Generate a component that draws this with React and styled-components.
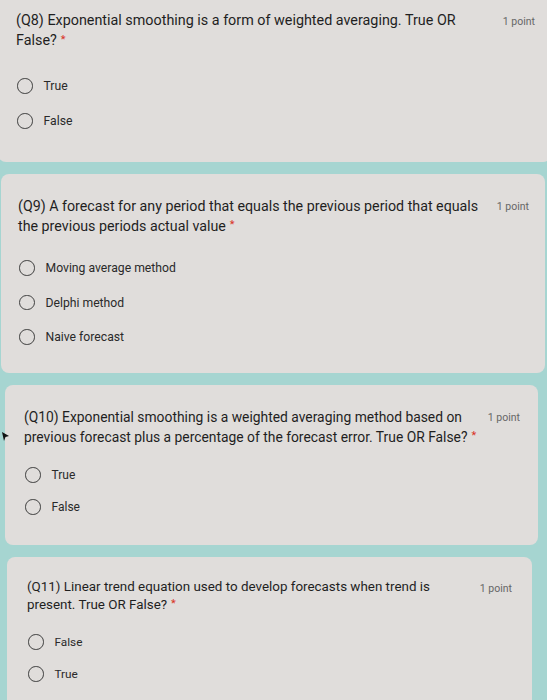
import React from "react";
import styled, { createGlobalStyle } from "styled-components";

const GlobalStyle = createGlobalStyle`
  html, body {
    margin: 0;
    padding: 0;
    background: #a6d5d1;
    overflow: hidden;
  }
  body {
    font-family: Roboto, "Liberation Sans", Arial, sans-serif;
  }
`;

const Page = styled.div`
  position: relative;
  display: flex;
  flex-direction: column;
  gap: 12px;
  margin-top: -12px;
  height: 720px;
`;

const Card = styled.section`
  background: #e0dddb;
  border-radius: 8px;
  margin: 0 ${(p) => p.$mr}px 0 ${(p) => p.$ml}px;
  padding: ${(p) => p.$pt}px ${(p) => p.$pr}px ${(p) => p.$pb}px ${(p) => p.$pl}px;
  flex-shrink: 0;
`;

const Header = styled.div`
  display: flex;
  align-items: flex-start;
`;

const Title = styled.div`
  flex: 1;
  min-width: 0;
  font-size: ${(p) => p.$fs}px;
  line-height: ${(p) => p.$lh}px;
  color: #1f1f1f;
  white-space: nowrap;
`;

const Line = styled.span`
  display: block;
`;

const Required = styled.span`
  color: #d93025;
  font-size: 11px;
  margin-left: 4px;
  vertical-align: top;
  position: relative;
  top: -1px;
`;

const Points = styled.span`
  font-size: 10.5px;
  color: #666;
  margin-top: 4px;
  flex-shrink: 0;
`;

const Options = styled.div`
  display: flex;
  flex-direction: column;
  gap: ${(p) => p.$gap}px;
  margin-top: ${(p) => p.$mt}px;
  padding-left: 1px;
`;

const Option = styled.label`
  display: flex;
  align-items: center;
  gap: 11px;
  height: 18px;
`;

const Radio = styled.span`
  width: 13.5px;
  height: 13.5px;
  border: 1.8px solid #3f3f3f;
  border-radius: 50%;
  flex-shrink: 0;
`;

const OptionText = styled.span`
  font-size: ${(p) => p.$fs}px;
  color: #2a2a2a;
`;

const Cursor = styled.svg`
  position: absolute;
  left: 1px;
  top: 443px;
`;

const questions = [
  {
    lines: ["(Q8) Exponential smoothing is a form of weighted averaging. True OR", "False?"],
    options: ["True", "False"],
    ml: -2, mr: -4, pl: 18, pr: 16, pt: 23, pb: 32, lh: 20, mt: 26, gap: 17, fs: 14.35, ofs: 12.2,
  },
  {
    lines: ["(Q9) A forecast for any period that equals the previous period that equals", "the previous periods actual value"],
    options: ["Moving average method", "Delphi method", "Naive forecast"],
    ml: 1, mr: 2, pl: 17, pr: 16, pt: 22, pb: 27, lh: 20, mt: 23, gap: 16.5, fs: 14.25, ofs: 12.2,
  },
  {
    lines: ["(Q10) Exponential smoothing is a weighted averaging method based on", "previous forecast plus a percentage of the forecast error. True OR False?"],
    options: ["True", "False"],
    ml: 5, mr: 9, pl: 19, pr: 18, pt: 22, pb: 29, lh: 20, mt: 19, gap: 14, fs: 13.85, ofs: 12,
  },
  {
    lines: ["(Q11) Linear trend equation used to develop forecasts when trend is", "present. True OR False?"],
    options: ["False", "True"],
    ml: 7, mr: 15, pl: 20, pr: 20, pt: 21, pb: 40, lh: 18, mt: 19, gap: 14, fs: 13.4, ofs: 11.8,
  },
];

export default function App() {
  return (
    <>
      <GlobalStyle />
      <Page>
        {questions.map((q, i) => (
          <Card key={i} $ml={q.ml} $mr={q.mr} $pl={q.pl} $pr={q.pr} $pt={q.pt} $pb={q.pb}>
            <Header>
              <Title $lh={q.lh} $fs={q.fs}>
                <Line>{q.lines[0]}</Line>
                <Line>
                  {q.lines[1]}
                  <Required>*</Required>
                </Line>
              </Title>
              <Points>1 point</Points>
            </Header>
            <Options $mt={q.mt} $gap={q.gap}>
              {q.options.map((o) => (
                <Option key={o}>
                  <Radio />
                  <OptionText $fs={q.ofs}>{o}</OptionText>
                </Option>
              ))}
            </Options>
          </Card>
        ))}
        <Cursor width="9" height="11" viewBox="0 0 9 11">
          <path d="M1 1 L8 5 L4.5 6 L3 10 Z" fill="#111" />
        </Cursor>
      </Page>
    </>
  );
}
